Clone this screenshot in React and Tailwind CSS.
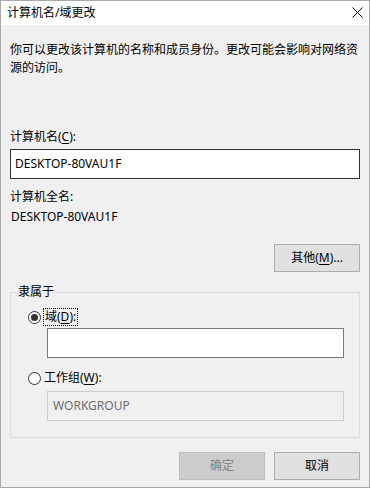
export default function App() {
  return (
    <div className="w-[370px] h-[488px] border border-[#a9a9a9] bg-[#f0f0f0] flex flex-col text-[12px] text-black font-['Noto_Sans','Noto_Sans_CJK_SC',sans-serif] overflow-hidden">
      {/* Title bar */}
      <div className="h-[24px] bg-white flex items-center justify-between pl-[6px] pr-[5px] shrink-0">
        <span className="leading-[18px]">计算机名/域更改</span>
        <svg width="11" height="11" viewBox="0 0 11 11" className="mr-[1px] mb-[2px]">
          <path d="M0.5 0.5 L10.5 10.5 M10.5 0.5 L0.5 10.5" stroke="#000" strokeWidth="1" fill="none" />
        </svg>
      </div>

      {/* Body */}
      <div className="flex-1 flex flex-col px-[9px]">
        <p className="mt-[16px] leading-[18px]">
          你可以更改该计算机的名称和成员身份。更改可能会影响对网络资源的访问。
        </p>

        <div className="mt-[51px] leading-[18px]">
          计算机名(<span className="underline underline-offset-2">C</span>):
        </div>
        <div className="mt-[3px] h-[30px] border border-[#333333] bg-white flex items-center px-[4px] leading-[18px]">
          DESKTOP-80VAU1F
        </div>

        <div className="mt-[9px] leading-[18px]">计算机全名:</div>
        <div className="mt-[2px] leading-[18px] pl-[1px]">DESKTOP-80VAU1F</div>

        <div className="mt-[18px] flex justify-end">
          <button className="w-[86px] h-[28px] bg-[#e1e1e1] border border-[#adadad] flex items-center justify-center leading-[18px]">
            其他(<span className="underline underline-offset-2">M</span>)...
          </button>
        </div>

        {/* Group box */}
        <div className="relative mt-[20px] h-[146px] border border-[#dcdcdc] pl-[17px] pt-[15px]">
          <span className="absolute -top-[10px] left-[6px] px-[1px] bg-[#f0f0f0] leading-[18px]">隶属于</span>

          <div className="flex items-center h-[18px]">
            <div className="w-[13px] h-[13px] rounded-full border border-[#333333] bg-white flex items-center justify-center">
              <div className="w-[7px] h-[7px] rounded-full bg-[#333333]" />
            </div>
            <div className="ml-[2px] h-[18px] border border-dotted border-black px-[1px] flex items-center leading-[16px]">
              域(<span className="underline underline-offset-2">D</span>):
            </div>
          </div>
          <div className="mt-[2px] ml-[19px] w-[297px] h-[30px] border border-[#7a7a7a] bg-white" />

          <div className="mt-[11px] flex items-center h-[18px]">
            <div className="w-[13px] h-[13px] rounded-full border border-[#333333] bg-white" />
            <div className="ml-[3px] leading-[18px]">
              工作组(<span className="underline underline-offset-2">W</span>):
            </div>
          </div>
          <div className="mt-[4px] ml-[19px] w-[297px] h-[30px] border border-[#cccccc] bg-[#f0f0f0] flex items-center px-[5px] text-[#6d6d6d] leading-[18px]">
            WORKGROUP
          </div>
        </div>

        {/* Buttons */}
        <div className="mt-[14px] flex justify-end gap-[9px]">
          <button className="w-[86px] h-[28px] bg-[#cccccc] border border-[#bfbfbf] text-[#838383] flex items-center justify-center leading-[18px]">
            确定
          </button>
          <button className="w-[86px] h-[28px] bg-[#e1e1e1] border border-[#adadad] flex items-center justify-center leading-[18px]">
            取消
          </button>
        </div>
      </div>
    </div>
  )
}
